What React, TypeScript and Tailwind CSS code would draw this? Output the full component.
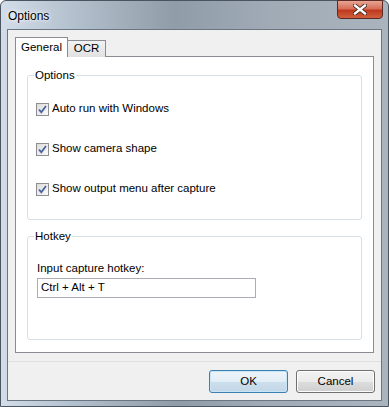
import React from "react";

const CheckBox = () => (
  <span className="w-[13px] h-[13px] border border-[#8e8f8f] bg-[linear-gradient(135deg,#dcdcdc,#fbfbfb)] flex items-center justify-center shrink-0">
    <svg width="11" height="11" viewBox="0 0 11 11">
      <path d="M2 5.5 L4.3 8.2 L9 2" fill="none" stroke="#4c61a0" strokeWidth="1.8" />
    </svg>
  </span>
);

const CheckRow = ({ label }: { label: string }) => (
  <label className="flex items-center gap-[3px] h-[16px]">
    <CheckBox />
    <span className="leading-none">{label}</span>
  </label>
);

const GroupBox = ({
  title,
  className,
  children,
}: {
  title: string;
  className: string;
  children: React.ReactNode;
}) => (
  <div
    className={`relative border border-[#d5dfe5] rounded-[3px] ${className}`}
  >
    <span className="absolute left-[6px] top-[-9px] bg-white px-[1px] leading-[16px]">
      {title}
    </span>
    {children}
  </div>
);

export default function App() {
  return (
    <div className="w-[389px] h-[407px] flex flex-col rounded-t-[6px] border border-[#4b5560] bg-[linear-gradient(90deg,#d2dde9_0%,#b4c1ce_18%,#909ca8_45%,#a0abb6_70%,#aab4be_100%)] font-['Segoe_UI','Liberation_Sans',sans-serif] text-[11.5px] text-black">
      <div className="h-[28px] flex items-start justify-between shrink-0">
        <span className="ml-[7px] mt-[6px] text-[12px] [text-shadow:0_0_6px_#ffffff,0_0_3px_#ffffff]">
          Options
        </span>
        <button className="w-[46px] h-[19px] mr-[5px] mt-[-1px] rounded-b-[4px] border border-[#5c2a24] bg-[linear-gradient(180deg,#e8a593_0%,#d56f59_45%,#c0391f_55%,#d0603f_100%)] flex items-center justify-center">
          <svg width="14" height="11" viewBox="0 0 14 11">
            <path
              d="M2 1.5 L12 9.5 M12 1.5 L2 9.5"
              stroke="#3a1c18"
              strokeWidth="4"
              strokeLinecap="square"
            />
            <path
              d="M2 1.5 L12 9.5 M12 1.5 L2 9.5"
              stroke="#ffffff"
              strokeWidth="2.4"
              strokeLinecap="square"
            />
          </svg>
        </button>
      </div>

      <div className="mx-[6px] mb-[5px] flex-1 flex flex-col bg-[#f0f0f0] border border-[#6b7683]">
        <div className="flex-1 flex flex-col pt-[7px] px-[7px]">
          <div className="flex items-end h-[20px] relative z-10">
            <div className="h-[20px] w-[53px] bg-white border border-[#898c95] border-b-0 flex items-center justify-center pt-[1px]">
              General
            </div>
            <div className="h-[17px] w-[38px] bg-[linear-gradient(180deg,#f2f2f2,#e1e1e1)] border border-[#898c95] border-l-0 border-b-0 flex items-center justify-center">
              OCR
            </div>
          </div>
          <div className="h-[297px] mt-[-1px] bg-white border border-[#898c95] flex flex-col px-[11px] pt-[18px]">
            <GroupBox title="Options" className="h-[145px] flex flex-col gap-[24px] pl-[8px] pt-[25px]">
              <CheckRow label="Auto run with Windows" />
              <CheckRow label="Show camera shape" />
              <CheckRow label="Show output menu after capture" />
            </GroupBox>
            <GroupBox title="Hotkey" className="mt-[16px] h-[104px] flex flex-col pl-[9px] pt-[23px]">
              <span className="leading-[16px]">Input capture hotkey:</span>
              <div className="mt-[2px] w-[219px] h-[20px] border border-[#abadb3] flex items-center pl-[3px]">
                Ctrl + Alt + T
              </div>
            </GroupBox>
          </div>
        </div>
        <div className="h-[39px] shrink-0 border-t border-[#dfdfdf] flex items-start justify-end gap-[8px] pt-[8px] pr-[6px]">
          <button className="w-[79px] h-[23px] rounded-[3px] border border-[#3c7fb1] bg-[linear-gradient(180deg,#eef5fa_0%,#e2edf5_50%,#cddfec_51%,#c2d6e6_100%)] shadow-[inset_0_0_0_1px_#c8e4f7]">
            OK
          </button>
          <button className="w-[79px] h-[23px] rounded-[3px] border border-[#707070] bg-[linear-gradient(180deg,#f2f2f2_0%,#ebebeb_50%,#dddddd_51%,#cfcfcf_100%)] shadow-[inset_0_0_0_1px_#fcfcfc]">
            Cancel
          </button>
        </div>
      </div>
    </div>
  );
}
